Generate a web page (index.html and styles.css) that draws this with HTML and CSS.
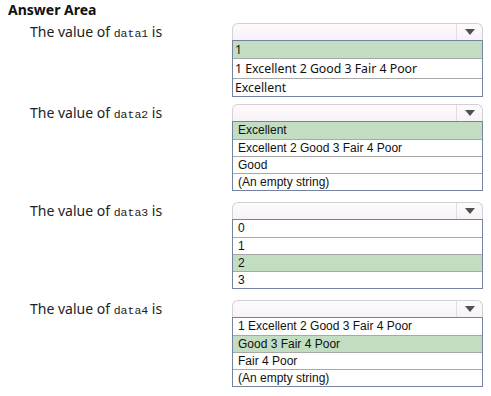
FILE: index.html
```html
<!DOCTYPE html>
<html>
<head>
<meta charset="utf-8">
<link rel="stylesheet" href="styles.css">
</head>
<body>
<div class="page">
  <div class="title">Answer Area</div>

  <div class="row row1">
    <div class="label">The value of <code>data1</code> is</div>
    <div class="select segoe">
      <div class="head"><span class="head-fill"></span><span class="arrow-box"><span class="arrow"></span></span></div>
      <div class="list">
        <div class="opt sel">1</div>
        <div class="opt">1 Excellent 2 Good 3 Fair 4 Poor</div>
        <div class="opt">Excellent</div>
      </div>
    </div>
  </div>

  <div class="row row2">
    <div class="label">The value of <code>data2</code> is</div>
    <div class="select arial">
      <div class="head"><span class="head-fill"></span><span class="arrow-box"><span class="arrow"></span></span></div>
      <div class="list">
        <div class="opt sel">Excellent</div>
        <div class="opt">Excellent 2 Good 3 Fair 4 Poor</div>
        <div class="opt">Good</div>
        <div class="opt">(An empty string)</div>
      </div>
    </div>
  </div>

  <div class="row row3">
    <div class="label">The value of <code>data3</code> is</div>
    <div class="select arial">
      <div class="head"><span class="head-fill"></span><span class="arrow-box"><span class="arrow"></span></span></div>
      <div class="list">
        <div class="opt">0</div>
        <div class="opt">1</div>
        <div class="opt sel">2</div>
        <div class="opt">3</div>
      </div>
    </div>
  </div>

  <div class="row row4">
    <div class="label">The value of <code>data4</code> is</div>
    <div class="select arial">
      <div class="head"><span class="head-fill"></span><span class="arrow-box"><span class="arrow"></span></span></div>
      <div class="list">
        <div class="opt">1 Excellent 2 Good 3 Fair 4 Poor</div>
        <div class="opt sel">Good 3 Fair 4 Poor</div>
        <div class="opt">Fair 4 Poor</div>
        <div class="opt">(An empty string)</div>
      </div>
    </div>
  </div>
</div>
</body>
</html>
```

FILE: styles.css
```css
html, body {
  margin: 0;
  padding: 0;
  background: #ffffff;
}

.page {
  width: 491px;
  height: 396px;
  font-family: "Noto Sans", "Open Sans", sans-serif;
  color: #1a1a1a;
}

.title {
  font-weight: 700;
  font-size: 14px;
  line-height: 19px;
  padding-left: 8px;
  height: 23px;
  color: #111;
}

.row {
  display: flex;
  align-items: flex-start;
}

.row2 { margin-top: 7px; }
.row3 { margin-top: 11px; }
.row4 { margin-top: 11px; }

.label {
  width: 202px;
  padding-left: 30px;
  font-size: 14px;
  line-height: 18px;
  color: #222;
}

.label code {
  font-family: "Liberation Mono", "DejaVu Sans Mono", monospace;
  font-size: 11.5px;
}

.select {
  width: 251px;
  display: flex;
  flex-direction: column;
}

.head {
  height: 16px;
  display: flex;
  border: 1px solid #d2d0d4;
  border-bottom: none;
  border-radius: 6px 6px 0 0;
  background: linear-gradient(#fdfafd, #f8f2f7);
}

.head-fill { flex: 1; }

.arrow-box {
  width: 25px;
  border-left: 1px solid #e2dee2;
  display: flex;
  align-items: center;
  justify-content: center;
}

.arrow {
  width: 0;
  height: 0;
  border-left: 5px solid transparent;
  border-right: 5px solid transparent;
  border-top: 6px solid #505050;
}

.list {
  border: 1px solid #7483a0;
  background: #fff;
}

.opt {
  height: 16px;
  line-height: 16px;
  padding-left: 5px;
  font-size: 12px;
  color: #111;
  border-top: 1px solid #a8a8a8;
  white-space: nowrap;
}

.opt:first-child { border-top: none; height: 17px; }

.sel { background: #c3ddc2; }

.segoe .opt {
  font-family: "Noto Sans", "Open Sans", sans-serif;
  font-size: 12.3px;
  padding-left: 2px;
  height: 17px;
  line-height: 17px;
}

.arial .opt {
  font-family: "Liberation Sans", Arial, sans-serif;
}

.segoe .list .opt:nth-child(2) { height: 19px; line-height: 19px; }
```
